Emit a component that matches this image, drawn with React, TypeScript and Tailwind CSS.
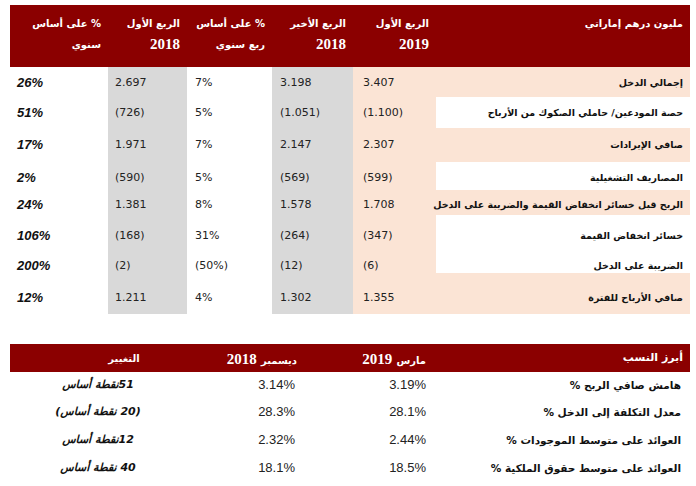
import React from 'react';

type Row = {
  label: string;
  yoy: string;
  q1_18: string;
  qoq: string;
  q4_18: string;
  q1_19: string;
  shaded: boolean;
  box: string;
};

const rows: Row[] = [
  { label: 'إجمالي الدخل', yoy: '26%', q1_18: '2.697', qoq: '7%', q4_18: '3.198', q1_19: '3.407', shaded: true, box: 'h-[30px] pt-[8px]' },
  { label: 'حصة المودعين/ حاملي الصكوك من الأرباح', yoy: '51%', q1_18: '(726)', qoq: '5%', q4_18: '(1.051)', q1_19: '(1.100)', shaded: false, box: 'h-[31px] pt-[8px]' },
  { label: 'صافي الإيرادات', yoy: '17%', q1_18: '1.971', qoq: '7%', q4_18: '2.147', q1_19: '2.307', shaded: true, box: 'h-[34px] pt-[9px]' },
  { label: 'المصاريف التشغيلية', yoy: '2%', q1_18: '(590)', qoq: '5%', q4_18: '(569)', q1_19: '(599)', shaded: false, box: 'h-[28px] pt-[8px]' },
  { label: 'الربح قبل خسائر انخفاض القيمة والضريبة على الدخل', yoy: '24%', q1_18: '1.381', qoq: '8%', q4_18: '1.578', q1_19: '1.708', shaded: true, box: 'h-[25px] pt-[7px]' },
  { label: 'خسائر انخفاض القيمة', yoy: '106%', q1_18: '(168)', qoq: '31%', q4_18: '(264)', q1_19: '(347)', shaded: false, box: 'h-[29px] pt-[13px]' },
  { label: 'الضريبة على الدخل', yoy: '200%', q1_18: '(2)', qoq: '(50%)', q4_18: '(12)', q1_19: '(6)', shaded: false, box: 'h-[29px] pt-[14px]' },
  { label: 'صافي الأرباح للفترة', yoy: '12%', q1_18: '1.211', qoq: '4%', q4_18: '1.302', q1_19: '1.355', shaded: true, box: 'h-[41px] pt-[17px]' },
];

const ratios = [
  { label: 'هامش صافي الربح %', mar: '3.19%', dec: '3.14%', chg: '51نقطة أساس', box: 'h-[26px] pt-[4px]' },
  { label: 'معدل التكلفة إلى الدخل %', mar: '28.1%', dec: '28.3%', chg: '(20 نقطة أساس)', box: 'h-[29px] pt-[5px]' },
  { label: 'العوائد على متوسط الموجودات %', mar: '2.44%', dec: '2.32%', chg: '12نقطة أساس', box: 'h-[27px] pt-[4px]' },
  { label: 'العوائد على متوسط حقوق الملكية %', mar: '18.5%', dec: '18.1%', chg: '40 نقطة أساس', box: 'h-[28px] pt-[5px]' },
];

const cols = 'grid grid-cols-[98px_79px_85px_81px_83px_254px]';
const num = "font-['DejaVu_Sans',sans-serif] text-[11px] leading-[16px] text-[#222]";
const arabicHead = "font-['DejaVu_Sans',sans-serif] font-bold text-[10px]";
const year = "font-['Liberation_Serif',serif] font-bold text-[15px]";

function HeadCell({ top, bottom, bottomIsYear }: { top: string; bottom?: string; bottomIsYear?: boolean }) {
  return (
    <div dir="rtl" className="flex flex-col items-start pr-[7px] pt-[8px] leading-[21px]">
      <span className={arabicHead}>{top}</span>
      {bottom && <span className={bottomIsYear ? year : arabicHead}>{bottom}</span>}
    </div>
  );
}

export default function App() {
  return (
    <div className="w-[696px] h-[486px] bg-white pl-[10px] pt-[5px]">
      <div className="w-[680px]">
        <div className={`${cols} h-[62px] bg-[#8b0000] text-white`}>
          <HeadCell top="% على أساس" bottom="سنوي" />
          <HeadCell top="الربع الأول" bottom="2018" bottomIsYear />
          <HeadCell top="% على أساس" bottom="ربع سنوي" />
          <HeadCell top="الربع الأخير" bottom="2018" bottomIsYear />
          <HeadCell top="الربع الأول" bottom="2019" bottomIsYear />
          <HeadCell top="مليون درهم إماراتي" />
        </div>

        {rows.map((r) => (
          <div key={r.label} className={`${cols} ${r.box.split(' ')[0]}`}>
            <div className={`${r.box} pl-[7px] font-['Liberation_Sans',sans-serif] font-bold italic text-[13px] leading-[16px] text-[#111]`}>
              {r.yoy}
            </div>
            <div className={`${r.box} pl-[7px] bg-[#d9d9d9] ${num}`}>{r.q1_18}</div>
            <div className={`${r.box} pl-[8px] ${num}`}>{r.qoq}</div>
            <div className={`${r.box} pl-[8px] bg-[#d9d9d9] ${num}`}>{r.q4_18}</div>
            <div className={`${r.box} pl-[10px] bg-[#fbe4d5] ${num}`}>{r.q1_19}</div>
            <div
              dir="rtl"
              className={`${r.box} pr-[7px] whitespace-nowrap ${r.shaded ? 'bg-[#fbe4d5]' : 'bg-white'} font-['DejaVu_Sans',sans-serif] font-bold text-[9.5px] leading-[16px] text-[#111]`}
            >
              {r.label}
            </div>
          </div>
        ))}

        <div className="mt-[30px]">
          <div className="grid grid-cols-[176px_119px_129px_256px] h-[28px] bg-[#8b0000] text-white items-center">
            <div dir="rtl" className={`text-center pl-[52px] ${arabicHead}`}>التغيير</div>
            <div dir="rtl" className="pr-[8px]">
              <span className={arabicHead}>ديسمبر</span> <span className={year}>2018</span>
            </div>
            <div dir="rtl" className="pr-[8px]">
              <span className={arabicHead}>مارس</span> <span className={year}>2019</span>
            </div>
            <div dir="rtl" className={`pr-[7px] ${arabicHead} text-[11px]`}>أبرز النسب</div>
          </div>

          {ratios.map((r) => (
            <div key={r.label} className={`grid grid-cols-[176px_119px_129px_256px] ${r.box}`}>
              <div dir="rtl" className="text-center font-['DejaVu_Sans',sans-serif] font-bold italic text-[11px] leading-[18px] text-[#111]">
                {r.chg}
              </div>
              <div className="text-right pr-[10px] font-['Liberation_Sans',sans-serif] text-[13px] leading-[18px] text-[#222]">
                {r.dec}
              </div>
              <div className="text-right pr-[8px] font-['Liberation_Sans',sans-serif] text-[13px] leading-[18px] text-[#222]">
                {r.mar}
              </div>
              <div dir="rtl" className="pr-[9px] whitespace-nowrap font-['DejaVu_Sans',sans-serif] font-bold text-[10.5px] leading-[18px] text-[#111]">
                {r.label}
              </div>
            </div>
          ))}
        </div>
      </div>
    </div>
  );
}
